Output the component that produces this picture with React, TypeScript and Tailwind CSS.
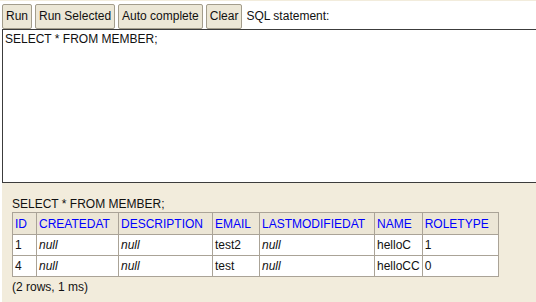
const columns = [
  { name: 'ID', w: 'w-[24px]' },
  { name: 'CREATEDAT', w: 'w-[82px]' },
  { name: 'DESCRIPTION', w: 'w-[94px]' },
  { name: 'EMAIL', w: 'w-[47px]' },
  { name: 'LASTMODIFIEDAT', w: 'w-[115px]' },
  { name: 'NAME', w: 'w-[47px]' },
  { name: 'ROLETYPE', w: 'w-[76px]' },
]

const rows = [
  ['1', null, null, 'test2', null, 'helloC', '1'],
  ['4', null, null, 'test', null, 'helloCC', '0'],
]

const buttons = ['Run', 'Run Selected', 'Auto complete', 'Clear']

export default function App() {
  return (
    <div className="w-[536px] h-[302px] overflow-hidden bg-white border-t border-[#f2ecdc] flex flex-col text-[12px] text-[#111] font-['Liberation_Sans',Arial,sans-serif]">
      {/* toolbar */}
      <div className="flex items-center gap-[3px] pl-[2px] pt-[2px] h-[28px] shrink-0">
        {buttons.map((b) => (
          <button
            key={b}
            className="h-[25px] px-[3px] border border-[#a39d8c] rounded-[2px] bg-[#ece7d6] text-[12px] leading-none text-[#111]"
          >
            {b}
          </button>
        ))}
        <span className="ml-[1px]">SQL statement:</span>
      </div>

      {/* query */}
      <div className="ml-[2px] w-[540px] h-[154px] shrink-0 border border-[#3c3c3c] px-[2px] py-[2px] leading-[14px]">
        SELECT * FROM MEMBER;
      </div>

      {/* result */}
      <div className="flex-1 ml-[2px] bg-[#f2ecdc] pl-[10px] pt-[14px]">
        <div className="leading-[14px] mb-[1px]">SELECT * FROM MEMBER;</div>
        <table className="border-collapse table-fixed">
          <thead>
            <tr>
              {columns.map((c) => (
                <th
                  key={c.name}
                  className={`${c.w} h-[22px] border border-[#aaa397] bg-[#ece6d6] px-[2px] text-left font-normal text-[#0000ff] whitespace-nowrap`}
                >
                  {c.name}
                </th>
              ))}
            </tr>
          </thead>
          <tbody>
            {rows.map((r, i) => (
              <tr key={i}>
                {r.map((v, j) => (
                  <td
                    key={j}
                    className="h-[21px] border border-[#aaa397] bg-white px-[2px] whitespace-nowrap"
                  >
                    {v === null ? <i>null</i> : v}
                  </td>
                ))}
              </tr>
            ))}
          </tbody>
        </table>
        <div className="leading-[14px] mt-[3px]">(2 rows, 1 ms)</div>
      </div>
    </div>
  )
}
